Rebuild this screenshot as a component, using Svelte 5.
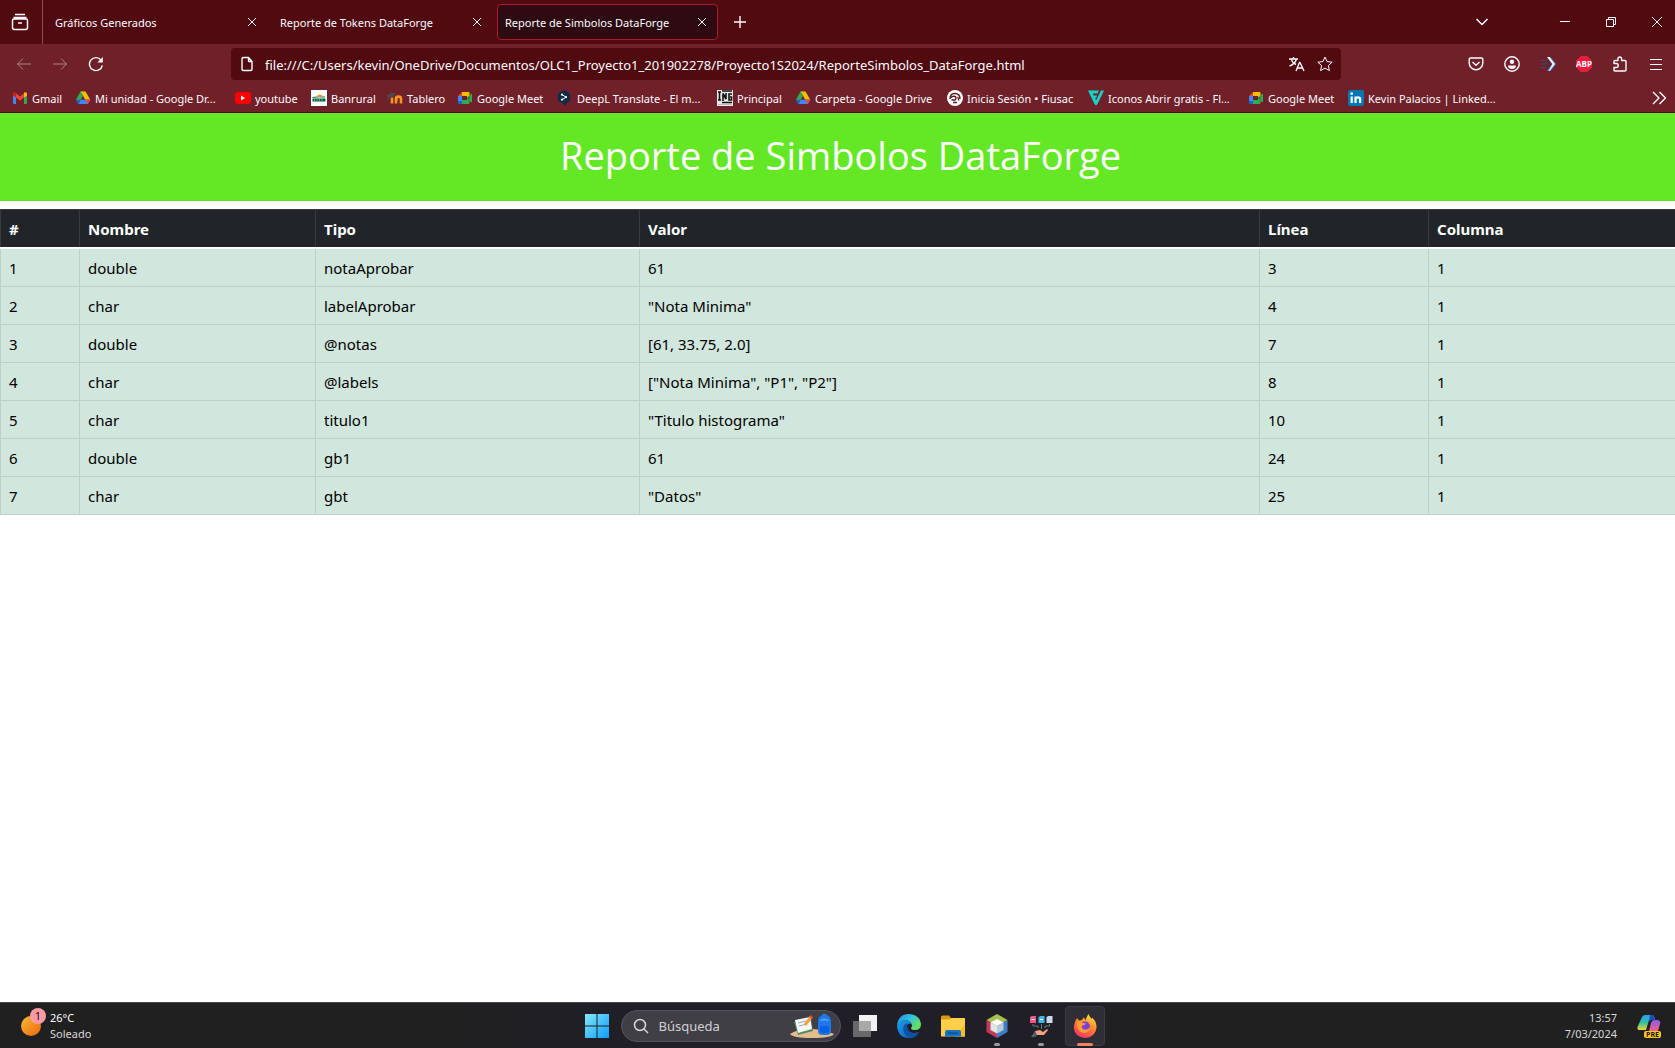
<script>
  const tabs = [
    { title: 'Gráficos Generados', active: false },
    { title: 'Reporte de Tokens DataForge', active: false },
    { title: 'Reporte de Simbolos DataForge', active: true },
  ];

  const bookmarks = [
    { icon: 'gmail', label: 'Gmail' },
    { icon: 'drive', label: 'Mi unidad - Google Dr...' },
    { icon: 'youtube', label: 'youtube' },
    { icon: 'banrural', label: 'Banrural' },
    { icon: 'moodle', label: 'Tablero' },
    { icon: 'meet', label: 'Google Meet' },
    { icon: 'deepl', label: 'DeepL Translate - El m...' },
    { icon: 'ing', label: 'Principal' },
    { icon: 'drive', label: 'Carpeta - Google Drive' },
    { icon: 'fiusac', label: 'Inicia Sesión • Fiusac' },
    { icon: 'flaticon', label: 'Iconos Abrir gratis - Fl...' },
    { icon: 'meet', label: 'Google Meet' },
    { icon: 'linkedin', label: 'Kevin Palacios | Linked...' },
  ];

  const columns = ['#', 'Nombre', 'Tipo', 'Valor', 'Línea', 'Columna'];
  const rows = [
    ['1', 'double', 'notaAprobar', '61', '3', '1'],
    ['2', 'char', 'labelAprobar', '"Nota Minima"', '4', '1'],
    ['3', 'double', '@notas', '[61, 33.75, 2.0]', '7', '1'],
    ['4', 'char', '@labels', '["Nota Minima", "P1", "P2"]', '8', '1'],
    ['5', 'char', 'titulo1', '"Titulo histograma"', '10', '1'],
    ['6', 'double', 'gb1', '61', '24', '1'],
    ['7', 'char', 'gbt', '"Datos"', '25', '1'],
  ];

  let url = $state(
    'file:///C:/Users/kevin/OneDrive/Documentos/OLC1_Proyecto1_201902278/Proyecto1S2024/ReporteSimbolos_DataForge.html'
  );
  let query = $state('');
</script>

{#snippet favicon(name)}
  <svg class="favicon" viewBox="0 0 16 16" aria-hidden="true">
    {#if name === 'gmail'}
      <path fill="#4285f4" d="M1 4.5V13q0 1 1 1h2V7z" />
      <path fill="#34a853" d="M15 4.5V13q0 1-1 1h-2V7z" />
      <path fill="#ea4335" d="M4 3.2 8 6.4l4-3.2V7.6L8 10.8 4 7.600z" />
      <path fill="#c5221f" d="M1 5.400V4c0-1.800 1.800-2.400 3-1.200V7.600z" />
      <path fill="#fbbc04" d="M15 5.400V4c0-1.800-1.800-2.400-3-1.200V7.600z" />
    {:else if name === 'drive'}
      <path fill="#188038" d="M5.500 1.500h5L8 6z" />
      <path fill="#fbbc04" d="M5.500 1.500h5l4.800 8.300h-5z" />
      <path fill="#34a853" d="M5.500 1.500 8 5.700 5.600 9.900H.8z" />
      <path fill="#4285f4" d="M5.600 9.800h9.700L12.800 14H3.200z" />
      <path fill="#ea4335" d="M10.300 9.800h5L12.800 14z" />
      <path fill="#1967d2" d="M.8 9.800h4.800L3.200 14z" />
    {:else if name === 'youtube'}
      <rect x="0" y="2" width="16" height="12" rx="3" fill="#f00" />
      <path fill="#fff" d="M6 5.500v5l4-2.500z" />
    {:else if name === 'banrural'}
      <path fill="#fff" d="M0 0h16v16H0z" />
      <path fill="#0b5f48" d="M1.500 8.500h13v3h-13z" />
      <path stroke="#a9cfc0" stroke-width=".6" d="M3.500 9v2M6 9v2M8.500 9v2M11 9v2" />
      <path fill="none" stroke="#0b7a48" d="M1.500 7.500q6-1 12.500-.5" />
      <path fill="#f59b23" d="M5 6.500q4-4 7.500 0z" />
    {:else if name === 'moodle'}
      <path fill="none" stroke="#f7941e" stroke-width="2.600" d="M9 13.500V8.600q0-2 2.500-2t2.500 2v4.900M5 7.500v6" />
      <path fill="#f7941e" d="M8 7h2.500v4H8z" />
      <path fill="#4b4b4d" d="M0 5.500 4.500 2.500 8.500 4 5.500 7.500 1.500 7v4H.6z" />
    {:else if name === 'meet'}
      <path fill="#ea4335" d="M1 6 5 2v4z" />
      <path fill="#fbbc04" d="M5 2h6.500q1 0 1 1v3.500L10 8V6H5z" />
      <path fill="#4285f4" d="M1 6h4v5H1z" />
      <path fill="#1967d2" d="M1 11h4v3H2q-1 0-1-1z" />
      <path fill="#34a853" d="M5 10h5V8l4-4q1-.5 1 .4v7.400q0 .9-1 .2L12.500 11v2q0 1-1 1H5z" />
      <path fill="#188038" d="m10 8 2.500-2.200v4.600z" />
    {:else if name === 'deepl'}
      <path fill="#0f2b46" d="M7 0l6 3.500v7.500L9 13.500V16l-3-2.500-5-2.500V3.500z" />
      <path fill="none" stroke="#fff" d="m5 4.500 4 2.700-4 2.500" />
      <circle cx="5" cy="4.700" r="1.100" fill="#fff" />
      <circle cx="9" cy="7.200" r="1.100" fill="#fff" />
      <circle cx="5" cy="9.700" r="1.100" fill="#fff" />
    {:else if name === 'ing'}
      <path fill="#e8e8e8" d="M0 0h16v16H0z" />
      <path fill="none" stroke="#111" stroke-width="1.600" d="M1 2h3M2.500 2v8M1 10h3M6 11V3.500l3 5.500V3M15 4h-3v6h2.500V7H13M5 1h10M5 12.500h10" />
      <path fill="none" stroke="#bbb" d="M1 14.500h14" />
    {:else if name === 'fiusac'}
      <circle cx="8" cy="8" r="8" fill="#fff" />
      <path fill="none" stroke="#5b1a20" stroke-width="1.400" d="M3 9q0-5.500 5-5.500t5 5.500M4 7.500q2-2 4-1t0 3.500H4.500M10.500 7q1.500 1 1 3.500M6 12.500h4" />
    {:else if name === 'flaticon'}
      <path fill="#17d4cb" d="M0 .5h11L9.400 3.500H4.700l1 2h3.600L8 8H7l1.200 2.300L13 .5h3L9.500 14q-1.500 2.500-3 0z" />
    {:else if name === 'linkedin'}
      <rect width="16" height="16" rx="2" fill="#0077b5" />
      <path fill="none" stroke="#fff" stroke-width="2.200" d="M3.700 6.500V13M7.500 13V6.500m0 3q0-2.200 2.300-2.200T12.200 9.500V13" />
      <circle cx="3.700" cy="3.700" r="1.400" fill="#fff" />
    {/if}
  </svg>
{/snippet}

{#snippet cross()}
  <svg class="cross" viewBox="0 0 10 10" aria-hidden="true"><path d="m1 1 8 8M9 1 1 9" /></svg>
{/snippet}

<div class="desktop">
  <header class="chrome">
    <div class="titlebar">
      <button class="firefox-view" aria-label="Firefox View">
        <svg class="line" viewBox="0 0 18 18"><path d="M4 1.500h10M2.500 4.500h13M3 6h12q1.500 0 1.500 1.500v7q0 2-2 2h-11q-2 0-2-2v-7Q1.500 6 3 6zM7 10h4" /></svg>
      </button>
      <div class="tabs">
        {#each tabs as tab}
          <div class="tab" class:active={tab.active}>
            <button class="tab-title">{tab.title}</button>
            <button class="tab-close" aria-label="Cerrar pestaña">{@render cross()}</button>
          </div>
        {/each}
        <button class="new-tab" aria-label="Nueva pestaña">
          <svg class="line plus" viewBox="0 0 12 12"><path d="M6 0v12M0 6h12" /></svg>
        </button>
      </div>
      <button class="all-tabs" aria-label="Listar pestañas">
        <svg class="line" viewBox="0 0 18 18"><path d="m3.500 6 5.500 5.500L14.500 6" /></svg>
      </button>
      <div class="window-controls">
        <button aria-label="Minimizar"><svg class="line cap" viewBox="0 0 10 10"><path d="M0 4.500h10" /></svg></button>
        <button aria-label="Restaurar"><svg class="line cap" viewBox="0 0 10 10"><path d="M.5 2.500h7v7h-7zM2.500 2.500v-2h7v7h-2" /></svg></button>
        <button aria-label="Cerrar"><svg class="line cap" viewBox="0 0 10 10"><path d="m0 0 10 10M10 0 0 10" /></svg></button>
      </div>
    </div>

    <div class="navbar">
      <div class="nav-group">
        <button class="disabled" aria-label="Atrás"><svg class="line" viewBox="0 0 16 16"><path d="M15 8H1.500M7 2.500 1.500 8 7 13.500" /></svg></button>
        <button class="disabled" aria-label="Adelante"><svg class="line" viewBox="0 0 16 16"><path d="M1 8h13.500M9 2.500 14.500 8 9 13.500" /></svg></button>
        <button aria-label="Recargar"><svg class="line bold" viewBox="0 0 16 16"><path d="M14.300 9.500A6.500 6.500 0 1 1 13 4" /><path class="solid" d="M14.800 1v5.500H9.300z" /></svg></button>
      </div>
      <div class="urlbar">
        <svg class="line bold doc" viewBox="0 0 16 16" aria-hidden="true"><path d="M9.500 1.500h-5q-1.500 0-1.500 1.500v10q0 1.500 1.500 1.500h7q1.500 0 1.500-1.500V5.500zV5q0 .5.500.5H13" /></svg>
        <input aria-label="Dirección" bind:value={url} spellcheck="false" />
        <button aria-label="Traducir página"><svg class="line bold" viewBox="0 0 16 16"><path d="M0 3h9M4.500 1v2M7.500 3Q6 8 .5 10M2 3q1.500 4 5 5.500M7 15l3.500-8.500h.5L15 15M8.300 12h5.200" /></svg></button>
        <button aria-label="Añadir a marcadores"><svg class="line" viewBox="0 0 16 16"><path d="m8 1 2.100 4.600 5 .6-3.700 3.400 1 5L8 12.100l-4.400 2.500 1-5L.9 6.200l5-.6z" /></svg></button>
      </div>
      <div class="nav-group tools">
        <button aria-label="Guardar en Pocket"><svg class="line bold" viewBox="0 0 16 16"><path d="M2.500 2h11q1.300 0 1.300 1.300V7A6.800 6.800 0 0 1 1.200 7V3.300Q1.200 2 2.500 2zM4.500 6 8 9.200 11.500 6" /></svg></button>
        <button aria-label="Cuenta"><svg class="line bold" viewBox="0 0 16 16"><circle cx="8" cy="8" r="7.200" /><circle class="solid" cx="8" cy="5.700" r="2.200" /><path class="solid" d="M4 9.500h8q0 3.500-4 3.500t-4-3.500z" /></svg></button>
        <button aria-label="Extensión de descargas"><svg viewBox="0 0 16 16"><path fill="#2c4a80" d="M1 4h5v1H1zM2 7.500h6v1H2zM1 11h5v1H1z" /><path fill="#3a8ad8" d="M7 1h3.500L16 8l-5.500 7H7l5-7z" /><path fill="#e8f4ff" d="M7 1h2.500L15 8l-5.500 7H8.500L12.500 8z" /></svg></button>
        <button class="abp" aria-label="Adblock Plus"><span>ABP</span></button>
        <button aria-label="Extensiones"><svg class="line bold" viewBox="0 0 16 16"><path d="M2 7.500V5.500q0-1 1-1h3V2.800q0-1.800 1.800-1.800T9.600 2.800v1.700H13q1 0 1 1V14q0 1-1 1H3q-1 0-1-1v-2.500h2.500q1.700 0 1.700-2t-1.700-2z" /></svg></button>
        <button aria-label="Menú"><svg class="line" viewBox="0 0 16 16"><path d="M2 3.500h12M2 8.500h12M2 13.500h12" /></svg></button>
      </div>
    </div>

    <nav class="bookmarks" aria-label="Marcadores">
      {#each bookmarks as mark}
        <a href="#marcador">{@render favicon(mark.icon)}<span>{mark.label}</span></a>
      {/each}
      <button aria-label="Más marcadores"><svg class="line bold" viewBox="0 0 16 16"><path d="m2 2 6 6-6 6M8.500 2l6 6-6 6" /></svg></button>
    </nav>
  </header>

  <main>
    <h1>Reporte de Simbolos DataForge</h1>
    <table>
      <colgroup>
        <col class="c-index" /><col class="c-name" /><col class="c-type" />
        <col class="c-value" /><col class="c-line" /><col class="c-column" />
      </colgroup>
      <thead>
        <tr>{#each columns as column}<th scope="col">{column}</th>{/each}</tr>
      </thead>
      <tbody>
        {#each rows as row}
          <tr>{#each row as cell}<td>{cell}</td>{/each}</tr>
        {/each}
      </tbody>
    </table>
  </main>

  <footer class="taskbar">
    <button class="weather">
      <span class="sun"><span class="badge">1</span></span>
      <span class="lines"><span class="temp">26°C</span><span>Soleado</span></span>
    </button>

    <div class="apps">
      <button class="app" aria-label="Inicio">
        <svg viewBox="0 0 24 24">
          <defs><linearGradient id="win" x2="1" y2="1"><stop stop-color="#7fe8ff" /><stop offset="1" stop-color="#109cf5" /></linearGradient></defs>
          <path fill="url(#win)" d="M0 0h11.500v11.500H0zM12.500 0H24v11.500H12.500zM0 12.500h11.500V24H0zM12.500 12.500H24V24H12.500z" />
        </svg>
      </button>
      <label class="search">
        <svg class="line lens" viewBox="0 0 16 16" aria-hidden="true"><circle cx="7" cy="7" r="5.500" /><path d="m11 11 4 4" /></svg>
        <input type="search" placeholder="Búsqueda" aria-label="Búsqueda" bind:value={query} />
        <svg class="art" viewBox="0 0 46 26" aria-hidden="true">
          <path fill="#e5bd8c" d="M1 21q8-5 20-5t24 5q-3 4-22 4T1 21z" />
          <path fill="#4b8f5d" d="m5 9 17-4 2 13-15 4z" />
          <path fill="#f4f6f7" d="m6 7 15-3 2 12-14 4z" />
          <path stroke="#9ab" d="m9 10 8-2M10 13l8-2" />
          <path stroke="#f2a33a" stroke-width="3" d="m16 12 6-8" />
          <path stroke="#e4483d" stroke-width="3" d="m21.500 5 1.500-2" />
          <path fill="none" stroke="#2f7fe8" stroke-width="1.500" d="M33 3q2-3 5 0" />
          <path fill="#1f78ea" d="M29 9q0-7 6.500-7T42 9v9q0 4-4 4h-5q-4 0-4-4z" />
          <path fill="#0c5fe0" d="M31 14q5-2 9 0v5q-4 2-9 0z" />
          <path fill="#4da2ff" d="M31 7q4-3 9 0v1q-5-1-9 0z" />
        </svg>
      </label>
      <button class="app" aria-label="Vista de tareas">
        <svg viewBox="0 0 24 24"><path fill="#f2f2f2" d="M6 1h18v16H6z" /><path fill="#777" fill-opacity=".85" d="M0 7h18v16H0z" /><path fill="#a9a9a9" d="M6 7h12v10H6z" /></svg>
      </button>
      <button class="app" aria-label="Microsoft Edge">
        <svg viewBox="0 0 24 24">
          <defs>
            <linearGradient id="edge-a" x2="1" y2=".5"><stop stop-color="#1b8fe0" /><stop offset=".55" stop-color="#35c1e0" /><stop offset="1" stop-color="#66e05a" /></linearGradient>
            <linearGradient id="edge-b" x2="1" y2="1"><stop stop-color="#1a9be8" /><stop offset="1" stop-color="#0d62b8" /></linearGradient>
          </defs>
          <path fill="url(#edge-b)" d="M0 12Q1 6 7 6q6 0 7 4-4-1-4 3 1 6 7 6 3 0 5-1-4 6-10 6Q1 24 0 12z" />
          <path fill="#0d52a4" d="M8 10q-3 4-1 8.500 2 4.500 6 5.500 6 0 9-6-3 1.500-6 1-6-1-6-6.500 0-2 1-3z" />
          <path fill="url(#edge-a)" d="M0 12Q1 0 12 0q11 1 12 10 0 6-6 6-4 0-4-2 2-2 0-5-2-3-6-3-6 0-8 6z" />
        </svg>
      </button>
      <button class="app" aria-label="Explorador de archivos">
        <svg viewBox="0 0 24 24"><path fill="#d99a0b" d="M0 3q0-1.500 1.500-1.500H8L10 4v4H0z" /><path fill="#ffcf4a" d="M0 5.500h8.500L10.500 4H24v18.500H0z" /><path fill="#f8bd25" d="M14 22.500 24 10v12.500z" /><path fill="#1673bf" d="M4 22.500V18q0-2 2-2h12q2 0 2 2v4.500z" /><path fill="#0b4f8c" d="M7 18.500h10V20H7z" /></svg>
      </button>
      <button class="app running" aria-label="NetBeans">
        <svg viewBox="0 0 24 24"><path fill="#a8c34b" d="m12 0 10.500 6L12 12 1.500 6z" /><path fill="#c33a55" d="M1.500 6 12 12v12L1.500 18z" /><path fill="#3f7fc4" d="M22.500 6 12 12v12l10.500-6z" /><path fill="#fff" d="m12 5 6.500 3.500L12 12 5.500 8.500z" /><path fill="#dce8ea" d="M5.500 8.500 12 12v7.500L5.500 16z" /><path fill="#b9cdd6" d="M18.500 8.500 12 12v7.500l6.500-3.500z" /></svg>
      </button>
      <button class="app running" aria-label="Gestor de datos">
        <svg viewBox="0 0 24 24">
          <path fill="#f0568a" d="M1 3l2-1h4v7H1z" /><path fill="#3bb8e8" d="M9.500 3l2-1h4v7h-6z" /><path fill="#c8dcea" d="M17.500 3l2-1h4v7h-6z" />
          <path fill="#fff" d="M2.500 5h3v1h-3zM11 5h3v1h-3z" />
          <path fill="none" stroke="#66798a" d="M4 10v2h5v2M12.500 10v5M20.500 10v2H16v2" />
          <path fill="#f3a27c" d="m6 17 5-1 3 2 4-3 1 1-4 5H7z" /><path fill="#53616e" d="m2 23 4-6 2 4-2 2z" />
        </svg>
      </button>
      <button class="app current" aria-label="Firefox">
        <svg viewBox="0 0 24 24">
          <defs><linearGradient id="fox" x1=".8" y1="0" x2=".3" y2="1"><stop stop-color="#ffe640" /><stop offset=".45" stop-color="#ff8a2a" /><stop offset="1" stop-color="#f5306b" /></linearGradient></defs>
          <path fill="url(#fox)" d="M4 4l2 2.500 3-.5L11 3q0 2 1.500 3 1.500-4 3-6 1 3 3.500 5V3.500Q24 8 23.500 14 22 23.500 12 24 1.500 23 .8 13.500 1 8 4 4z" />
          <circle cx="12" cy="12.500" r="5" fill="#7a3fe0" />
          <path fill="#ff9b2f" d="M4 8q4-2 6 1l3 .5q-1 2-4 2-1 2 1 3.500 4 2 7-2-1 6-6 6-6-1-7-7z" />
        </svg>
      </button>
    </div>

    <div class="tray">
      <button class="clock"><span>13:57</span><span>7/03/2024</span></button>
      <button class="copilot" aria-label="Copilot">
        <svg viewBox="0 0 24 24">
          <defs>
            <linearGradient id="cop-a" x2="0" y2="1"><stop stop-color="#2a9df0" /><stop offset=".5" stop-color="#2fc0a0" /><stop offset="1" stop-color="#f2d33a" /></linearGradient>
            <linearGradient id="cop-b" x2="0" y2="1"><stop stop-color="#8f5be8" /><stop offset="1" stop-color="#f0608a" /></linearGradient>
          </defs>
          <path fill="url(#cop-a)" d="M5 3q1-2 3-2h7q2 0 3 4l-6 1-3 10H2Q0 16 .500 13z" />
          <path fill="#1450b8" d="M13 1h2q2 0 3 5-4-1-6 2z" />
          <path fill="url(#cop-b)" d="M14 9q1-3 4-3h3q3 1 2 4l-2 7h-9z" />
        </svg>
        <span class="pre">PRE</span>
      </button>
    </div>
  </footer>
</div>

<style>
  :global(body) { margin: 0; background: #fff; }
  * { box-sizing: border-box; }
  button, input { font: inherit; color: inherit; background: none; border: 0; padding: 0; margin: 0; outline: 0; }
  button { display: flex; align-items: center; justify-content: center; }
  svg { display: block; width: 16px; height: 16px; flex: none; }
  .line { fill: none; stroke: currentColor; stroke-width: 1; stroke-linejoin: round; }
  .bold { stroke-width: 1.400; }
  .solid { fill: currentColor; stroke: none; }

  .desktop { min-height: 100vh; display: flex; flex-direction: column; font-family: "Noto Sans", "Open Sans", sans-serif; }

  .chrome { background: #6f2028; color: #fbfbfe; border-bottom: 1px solid #500a10; font-size: 11px; }
  .titlebar { height: 44px; background: #500a10; display: flex; align-items: stretch; }
  .firefox-view { width: 43px; padding-right: 2px; border-right: 1px solid #85545a; }
  .firefox-view svg { width: 18px; height: 18px; stroke-width: 1.500; }
  .tabs { flex: 1; display: flex; align-items: center; padding-left: 4px; }
  .tab { width: 221px; height: 36px; margin-right: 4px; border: 1px solid transparent; border-radius: 4px; display: flex; align-items: center; padding: 0 8px 0 7px; white-space: nowrap; }
  .active { background: #2d0b10; border-color: #b4162a; }
  .tab-title { flex: 1; justify-content: flex-start; }
  .tab-close { width: 14px; height: 24px; }
  .cross { width: 10px; height: 10px; stroke: currentColor; stroke-width: 1; }
  .new-tab { width: 36px; height: 36px; }
  .plus { width: 12px; height: 12px; stroke-width: 1.400; }
  .all-tabs { width: 36px; margin-right: 42px; }
  .all-tabs svg { width: 18px; height: 18px; stroke-width: 1.500; }
  .window-controls { display: flex; margin-right: -5px; }
  .window-controls button { width: 46px; }
  .cap { width: 10px; height: 10px; }

  .navbar { height: 40px; display: flex; align-items: center; }
  .nav-group { display: flex; width: 231px; padding-left: 6px; }
  .nav-group button { width: 36px; height: 32px; }
  .disabled { opacity: .45; }
  .tools { width: 334px; justify-content: flex-end; padding: 0 1px 0 0; }
  .urlbar { flex: 1; height: 32px; border-radius: 4px; background: #500a10; display: flex; align-items: center; padding: 0 2px 0 8px; }
  .urlbar input { flex: 1; min-width: 0; margin-left: 10px; padding-top: 2px; font-size: 13px; }
  .urlbar button { width: 28px; height: 28px; }
  .abp span { width: 16px; height: 16px; background: #ec1c40; font-family: "Open Sans", sans-serif; font-size: 8px; line-height: 16px; font-weight: 700; clip-path: polygon(30% 0, 70% 0, 100% 30%, 100% 70%, 70% 100%, 30% 100%, 0 70%, 0 30%); }

  .bookmarks { height: 28px; display: grid; grid-template-columns: 63px 160px 76px 76px 70px 100px 160px 78px 152px 141px 160px 100px 160px 1fr; align-items: center; padding: 0 8px 0 12px; }
  .bookmarks a { display: flex; align-items: center; gap: 4px; color: inherit; text-decoration: none; white-space: nowrap; }
  .bookmarks button { justify-content: flex-end; }

  main { flex: 1; color: #000; }
  h1 { margin: 0 0 8px; padding: 18px 16px 22px 22px; background: #64e724; color: #fff; font-family: "Open Sans", "Noto Sans", sans-serif; font-size: 38px; line-height: 48px; font-weight: 400; text-align: center; }
  table { width: 100%; table-layout: fixed; border-collapse: collapse; font-size: 15px; line-height: 21px; text-align: left; }
  .c-index { width: 79px; }
  .c-name { width: 236px; }
  .c-type { width: 324px; }
  .c-value { width: 620px; }
  .c-line { width: 169px; }
  .c-column { width: 247px; }
  th, td { padding: 9px 8px 7px; border: 1px solid #bcd0c7; }
  td { background: #d1e7dd; }
  th { background: #212529; border-color: #373b3e; border-bottom: 2px solid #fff; color: #fff; }

  .taskbar { height: 46px; background: linear-gradient(90deg, #202020 0, #202020 25%, #201f28 40%, #201f28 60%, #202020 70%); border-top: 1px solid #47464a; color: #d8d8d8; display: grid; grid-template-columns: 1fr auto 1fr; align-items: center; font-size: 11px; line-height: 16px; }
  .weather { justify-content: flex-start; padding-left: 21px; gap: 9px; }
  .lines { display: flex; flex-direction: column; text-align: left; }
  .temp { color: #fff; }
  .sun { position: relative; width: 20px; height: 20px; border-radius: 50%; background: linear-gradient(135deg, #f3bd35, #ee6410); }
  .badge { position: absolute; left: 9px; top: -8px; width: 16px; height: 16px; border-radius: 50%; background: #ff99a4; color: #111; text-align: center; }
  .apps { display: flex; align-items: center; padding-left: 6px; }
  .app { position: relative; width: 44px; height: 44px; }
  .app svg { width: 24px; height: 24px; }
  .running::after, .current::after { content: ''; position: absolute; bottom: 2px; width: 6px; height: 3px; border-radius: 2px; background: #9a9a9d; }
  .current::before { content: ''; position: absolute; inset: 2px; border: 1px solid #3d3c43; border-radius: 4px; background: #2f2e36; }
  .current svg { position: relative; }
  .current::after { width: 16px; background: #f3805f; }
  .search { width: 220px; height: 32px; margin: 0 2px; border: 1px solid #55545b; border-radius: 16px; background: #403f46; display: flex; align-items: center; padding: 0 5px 0 11px; font-size: 13px; }
  .search input { flex: 1; min-width: 0; margin-left: 10px; }
  .search input::placeholder { color: #cfcfd2; opacity: 1; }
  .lens { stroke-width: 1.500; }
  .art { width: 46px; height: 26px; }
  .tray { display: flex; justify-content: flex-end; align-items: center; padding-right: 14px; gap: 20px; }
  .clock { flex-direction: column; align-items: flex-end; }
  .copilot { position: relative; }
  .copilot svg { width: 24px; height: 24px; }
  .pre { position: absolute; right: 0; bottom: 0; padding: 0 2px; border-radius: 2px; background: #fcc419; color: #1b1b1b; font-family: "Open Sans", sans-serif; font-size: 7px; line-height: 7px; font-weight: 700; }
</style>
